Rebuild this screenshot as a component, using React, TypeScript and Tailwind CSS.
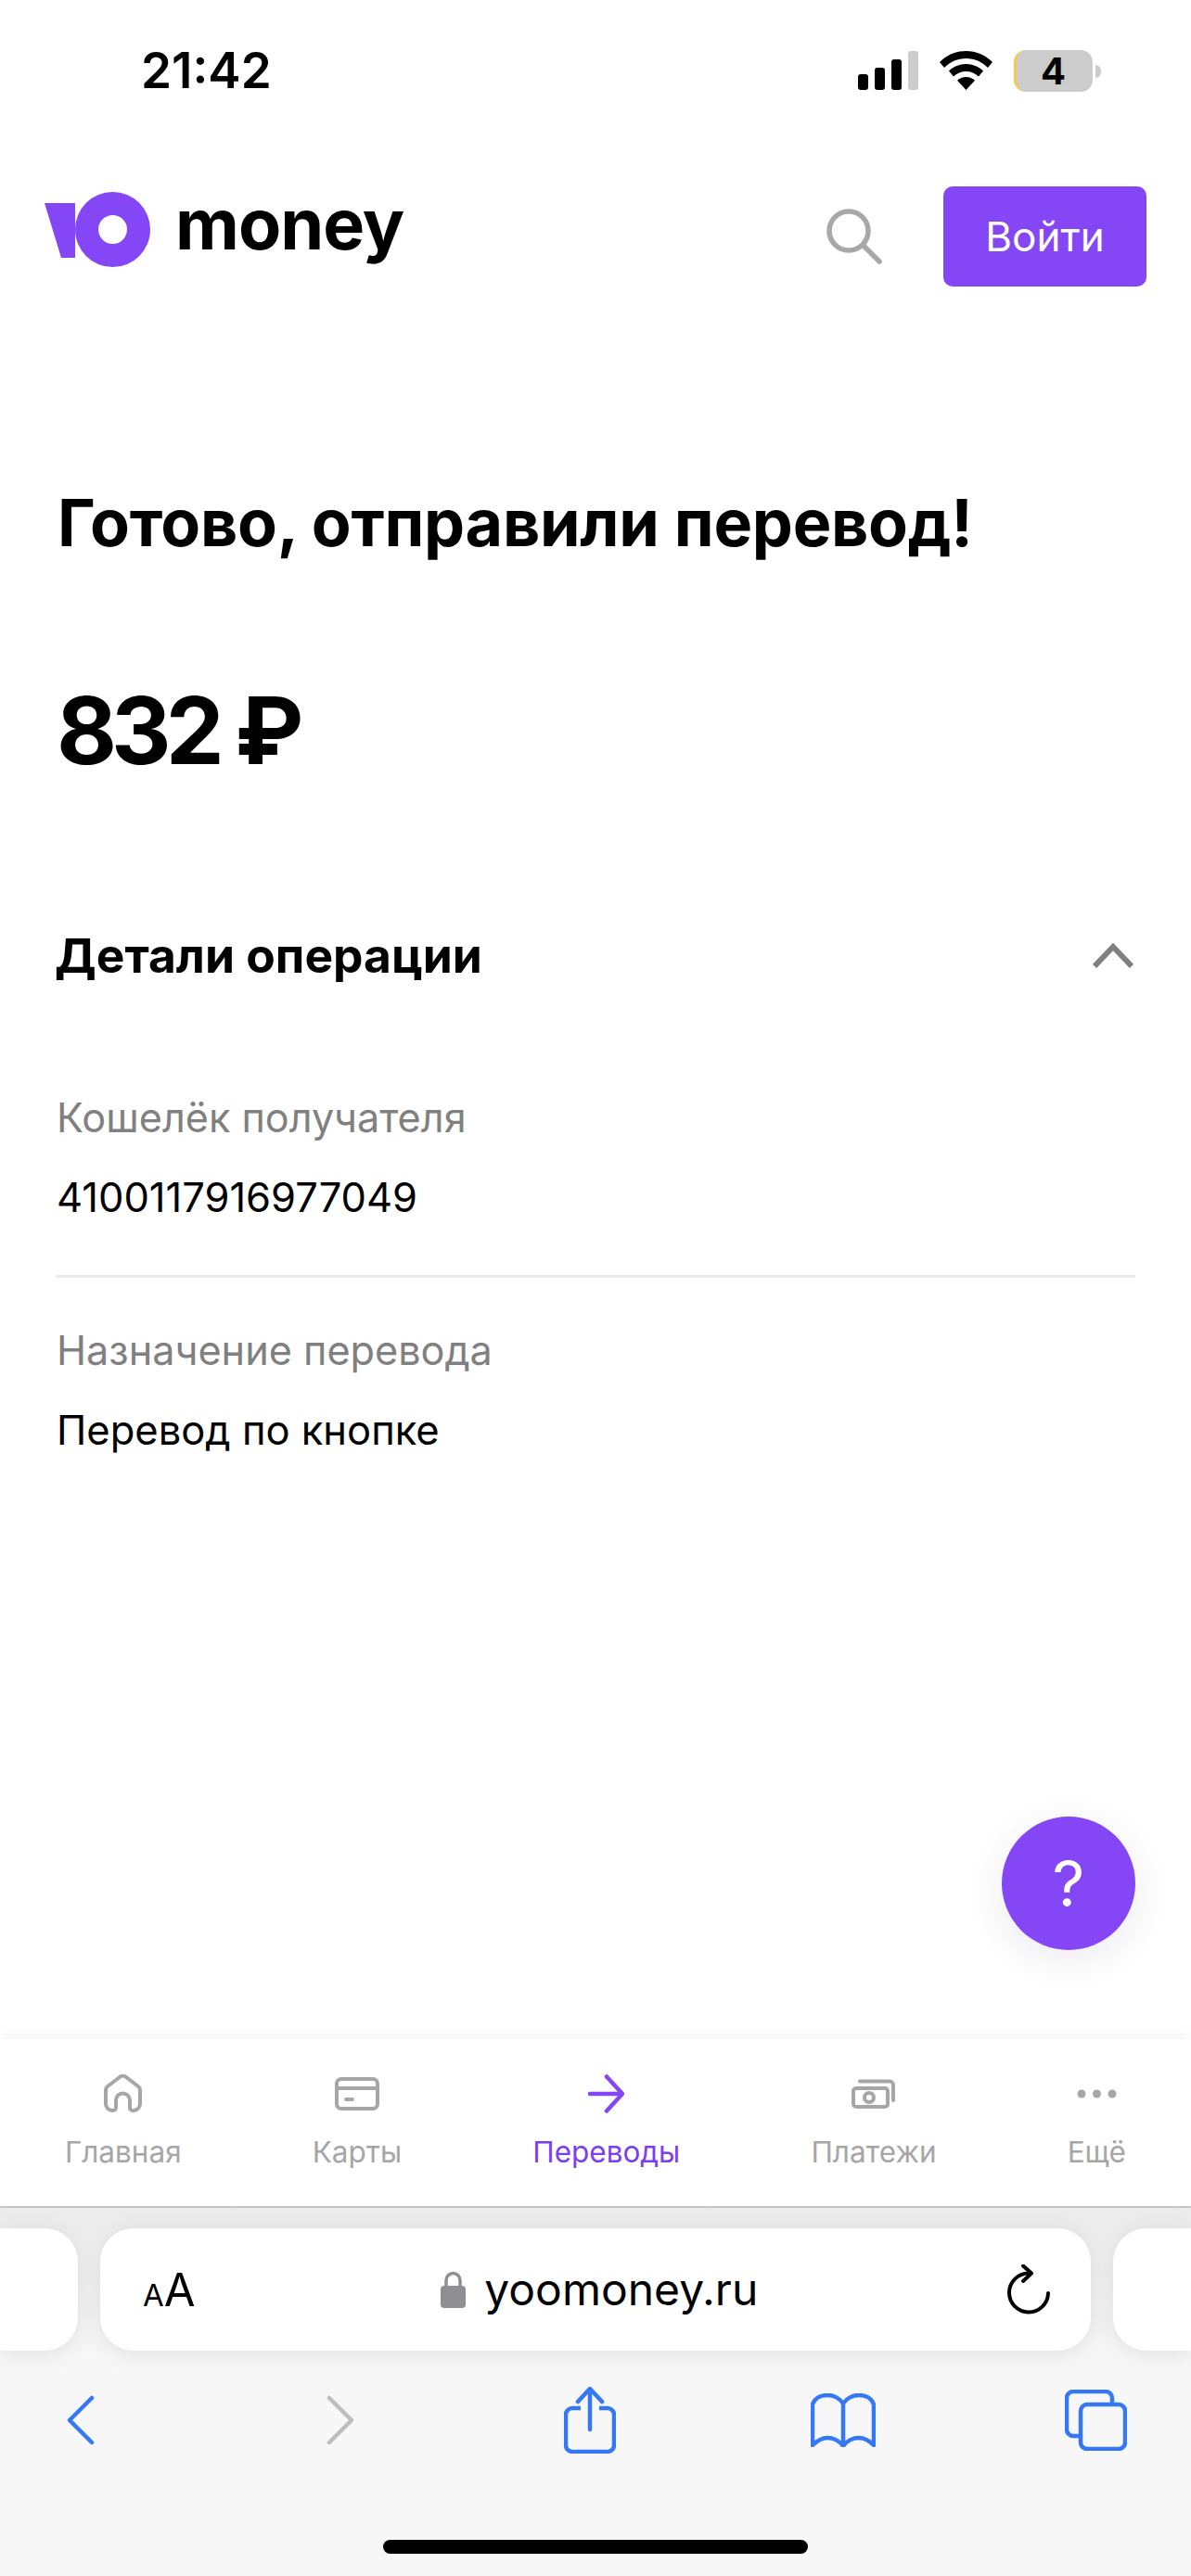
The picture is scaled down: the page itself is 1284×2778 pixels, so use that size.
const sans = "font-['Inter','Noto_Sans',sans-serif]";

function Logo() {
  return (
    <svg width="114" height="81" viewBox="0 0 114 81" fill="#8547f6">
      <path d="M0 12H33V71H18Z" />
      <path fillRule="evenodd" d="M73.5 0a40.5 40.5 0 1 1 0 81a40.5 40.5 0 1 1 0-81ZM73.5 25a15.5 15.5 0 1 0 0 31a15.5 15.5 0 1 0 0-31Z" />
    </svg>
  );
}

function StatusIcons() {
  return (
    <div className="flex items-end gap-[23px]">
      <svg width="65" height="42" viewBox="0 0 65 42">
        <rect x="0" y="25" width="11" height="17" rx="3" />
        <rect x="18" y="18" width="11" height="24" rx="3" />
        <rect x="36" y="9" width="11" height="33" rx="3" />
        <rect x="54" y="0" width="11" height="42" rx="3" fill="#cccccc" />
      </svg>
      <svg width="57" height="42" viewBox="0 0 57 42">
        <path d="M28.5 0C18 0 8 4 0 12l5 6C11.500 11.500 19.500 8 28.500 8S45.500 11.500 52 18l5-6C49 4 39 0 28.500 0Z" />
        <path d="M28.500 14c-7 0-13.500 2.800-18.500 7.500l5 6c3.500-3.500 8.300-5.500 13.500-5.500s10 2 13.500 5.500l5-6C42 16.800 35.500 14 28.500 14Z" />
        <path d="M28.500 28c-3.700 0-7 1.400-9.500 3.700L28.500 42 38 31.700C35.500 29.400 32.200 28 28.500 28Z" />
      </svg>
      <div className="flex items-center gap-[3px] -mb-[2px]">
        <div className="w-[85px] h-[45px] rounded-[13px] bg-[#cccccc] border-l-[3px] border-l-[#f5cb4e] flex items-center justify-center text-[40px] font-bold leading-none text-black pr-[3px]">
          4
        </div>
        <div className="w-[6px] h-[14px] rounded-r-full bg-[#cccccc]" />
      </div>
    </div>
  );
}

function TabIcon({ name, color }: { name: string; color: string }) {
  if (name === "home") {
    return (
      <svg width="41" height="42" viewBox="0 0 41 42" fill="none" stroke={color} strokeWidth="4" strokeLinejoin="round">
        <path d="M2 32V17a5 5 0 0 1 2-4L17 3a5 5 0 0 1 7 0L37 13a5 5 0 0 1 2 4V32a7 7 0 0 1-7 7h-1a3 3 0 0 1-3-3V28a7.500 7.500 0 0 0-15 0v8a3 3 0 0 1-3 3H9a7 7 0 0 1-7-7Z" />
      </svg>
    );
  }
  if (name === "card") {
    return (
      <svg width="48" height="36" viewBox="0 0 48 36" fill="none" stroke={color} strokeWidth="4">
        <rect x="2" y="2" width="44" height="32" rx="5" />
        <path d="M2 12H46" />
        <path d="M12 24H19" strokeLinecap="round" />
      </svg>
    );
  }
  if (name === "arrow") {
    return (
      <svg width="39" height="42" viewBox="0 0 39 42" fill="none" stroke={color} strokeWidth="4.500" strokeLinecap="round" strokeLinejoin="round">
        <path d="M2 21H36M20 2.500L37 21L20 39.500" />
      </svg>
    );
  }
  if (name === "money") {
    return (
      <svg width="47" height="32" viewBox="0 0 47 32" fill="none" stroke={color} strokeWidth="4">
        <rect x="2" y="10" width="37" height="20" rx="3" />
        <circle cx="19" cy="20" r="5" />
        <path d="M9 2.500H41a4 4 0 0 1 4 4V23" strokeLinecap="round" />
      </svg>
    );
  }
  return (
    <svg width="43" height="10" viewBox="0 0 43 10" fill={color}>
      <circle cx="5" cy="5" r="4.500" />
      <circle cx="21.500" cy="5" r="4.500" />
      <circle cx="38" cy="5" r="4.500" />
    </svg>
  );
}

const tabs = [
  { label: "Главная", icon: "home" },
  { label: "Карты", icon: "card" },
  { label: "Переводы", icon: "arrow", active: true },
  { label: "Платежи", icon: "money" },
  { label: "Ещё", icon: "dots" },
];

function TabBar() {
  return (
    <div className="h-[182px] bg-white border-b-2 border-b-[#c6c6c6] shadow-[0_-6px_12px_rgba(0,0,0,0.035)] px-[70px] flex justify-between relative">
      {tabs.map((tab) => (
        <div key={tab.label} className="flex flex-col items-center">
          <div className="h-[42px] mt-[38px] flex items-center justify-center">
            <TabIcon name={tab.icon} color={tab.active ? "#8547f6" : "#a6a6a6"} />
          </div>
          <div className={`mt-[22px] text-[31.5px] leading-[40px] ${tab.active ? "text-[#7b3ff2]" : "text-[#a6a6a6]"}`}>
            {tab.label}
          </div>
        </div>
      ))}
    </div>
  );
}

function AddressBar() {
  const pill = "h-[132px] bg-white shadow-[0_4px_26px_rgba(0,0,0,0.09)]";
  return (
    <div className="pt-[22px] flex gap-[24px]">
      <div className={`w-[84px] rounded-r-[36px] ${pill}`} />
      <div className={`flex-1 rounded-[36px] ${pill} flex items-center justify-between pl-[46px] pr-[44px]`}>
        <div className="flex items-baseline text-black font-['Inter',sans-serif] leading-none">
          <span className="text-[33px]">A</span>
          <span className="text-[49px]">A</span>
        </div>
        <div className="flex items-center gap-[20px] -ml-[4px]">
          <svg width="27" height="40" viewBox="0 0 27 40" fill="none">
            <path d="M6 18V10a7.500 7.500 0 0 1 15 0v8" stroke="#8e8e93" strokeWidth="3.500" />
            <rect x="0" y="16" width="27" height="24" rx="4" fill="#8e8e93" />
          </svg>
          <span className="text-[48px] leading-none text-black font-['Inter',sans-serif]">yoomoney.ru</span>
        </div>
        <svg width="46" height="54" viewBox="0 0 46 54" fill="none" stroke="#000" strokeWidth="4" strokeLinecap="round" strokeLinejoin="round">
          <path d="M23 9.500A21 21 0 1 0 44 31" />
          <path d="M17 1.500L26 9.500L17 18" />
        </svg>
      </div>
      <div className={`w-[84px] rounded-l-[36px] ${pill}`} />
    </div>
  );
}

function Toolbar() {
  const blue = "#3478f6";
  return (
    <div className="mt-[25px] h-[100px] pl-[72px] flex items-center">
      <svg width="30" height="54" viewBox="0 0 30 54" fill="none" stroke={blue} strokeWidth="4.500" strokeLinecap="round" strokeLinejoin="round">
        <path d="M27 3L3 27L27 51" />
      </svg>
      <svg className="ml-[250px]" width="30" height="54" viewBox="0 0 30 54" fill="none" stroke="#bdbdbd" strokeWidth="4.500" strokeLinecap="round" strokeLinejoin="round">
        <path d="M3 3L27 27L3 51" />
      </svg>
      <svg className="ml-[226px]" width="56" height="72" viewBox="0 0 56 72" fill="none" stroke={blue} strokeWidth="4.500" strokeLinecap="round" strokeLinejoin="round">
        <path d="M18 23H9a7 7 0 0 0-7 7V63a7 7 0 0 0 7 7H47a7 7 0 0 0 7-7V30a7 7 0 0 0-7-7H38" strokeLinecap="butt" />
        <path d="M28 46V3M15 16L28 2L41 16" />
      </svg>
      <svg className="ml-[210px]" width="70" height="58" viewBox="0 0 70 58" fill="none" stroke={blue} strokeWidth="4.500" strokeLinejoin="round">
        <path d="M35 11C31 5 24 2 18 2C10 2 4 6 2 12V56C8 50 13 48 18 48C24 48 31 51 35 57C39 51 46 48 52 48C57 48 62 50 68 56V12C66 6 60 2 52 2C46 2 39 5 35 11ZM35 11V57" />
      </svg>
      <svg className="ml-[204px]" width="67" height="66" viewBox="0 0 67 66" fill="none" stroke={blue} strokeWidth="4.500" strokeLinejoin="round">
        <path d="M17 50H9a7 7 0 0 1-7-7V9a7 7 0 0 1 7-7H44a7 7 0 0 1 7 7V16" />
        <rect x="17" y="16" width="48" height="48" rx="7" />
      </svg>
    </div>
  );
}

function DetailRow({ label, value }: { label: string; value: string }) {
  return (
    <div className="pl-[1px]">
      <div className="text-[43.2px] leading-[56px] text-[#808080]">{label}</div>
      <div className="mt-[30px] text-[43.5px] leading-[56px] text-black">{value}</div>
    </div>
  );
}

export default function App() {
  return (
    <div className={`relative w-[1284px] h-[2778px] bg-white flex flex-col overflow-hidden text-black ${sans}`}>
      <div className="h-[150px] flex items-start justify-between pl-[152px] pr-[97px]">
        <div className="text-[53px] font-semibold leading-none mt-[50px]">21:42</div>
        <div className="mt-[54px]">
          <StatusIcons />
        </div>
      </div>

      <header className="mt-[51px] h-[108px] flex items-center justify-between pl-[48px] pr-[48px]">
        <div className="flex items-center gap-[27px] -mt-[15px]">
          <Logo />
          <span className="text-[75.5px] font-bold leading-none tracking-[-1px] -mt-[12px]">money</span>
        </div>
        <div className="flex items-center gap-[66px]">
          <svg width="60" height="60" viewBox="0 0 60 60" fill="none" stroke="#a8a8a8" strokeWidth="5.500" strokeLinecap="round">
            <circle cx="24" cy="24" r="21" />
            <path d="M40 40L57 57" />
          </svg>
          <button className="w-[219px] h-[108px] rounded-[10px] bg-[#8547f6] text-white text-[44px]">Войти</button>
        </div>
      </header>

      <main className="flex-1 px-[60px]">
        <h1 className="mt-[215px] ml-[2px] text-[70px] leading-[80px] font-bold tracking-[-0.3px]">Готово, отправили перевод!</h1>
        <div className="mt-[129px] ml-[1px] text-[100px] leading-[110px] font-bold tracking-[-6px]">832 ₽</div>
        <div className="mt-[157px] flex items-center justify-between pr-[2px]">
          <h2 className="-ml-[1px] text-[51.5px] leading-[60px] font-bold">Детали операции</h2>
          <svg width="44" height="28" viewBox="0 0 44 28" fill="none" stroke="#808080" strokeWidth="6">
            <path d="M2 26L22 5L42 26" />
          </svg>
        </div>
        <div className="mt-[117px]">
          <DetailRow label="Кошелёк получателя" value="4100117916977049" />
        </div>
        <div className="mt-[56px] h-[3px] bg-[#ebebeb]" />
        <div className="mt-[50px]">
          <DetailRow label="Назначение перевода" value="Перевод по кнопке" />
        </div>
      </main>

      <button className="absolute left-[1080px] top-[1959px] w-[144px] h-[144px] rounded-full bg-[#8547f6] text-white text-[68px] leading-none font-normal shadow-[0_10px_40px_rgba(60,50,90,0.1)]">
        ?
      </button>

      <TabBar />

      <div className="h-[397px] bg-gradient-to-b from-[#ebebeb] to-[#f7f7f7] to-[40%]">
        <AddressBar />
        <Toolbar />
        <div className="mt-[79px] mx-auto w-[458px] h-[15px] rounded-full bg-black" />
      </div>
    </div>
  );
}
